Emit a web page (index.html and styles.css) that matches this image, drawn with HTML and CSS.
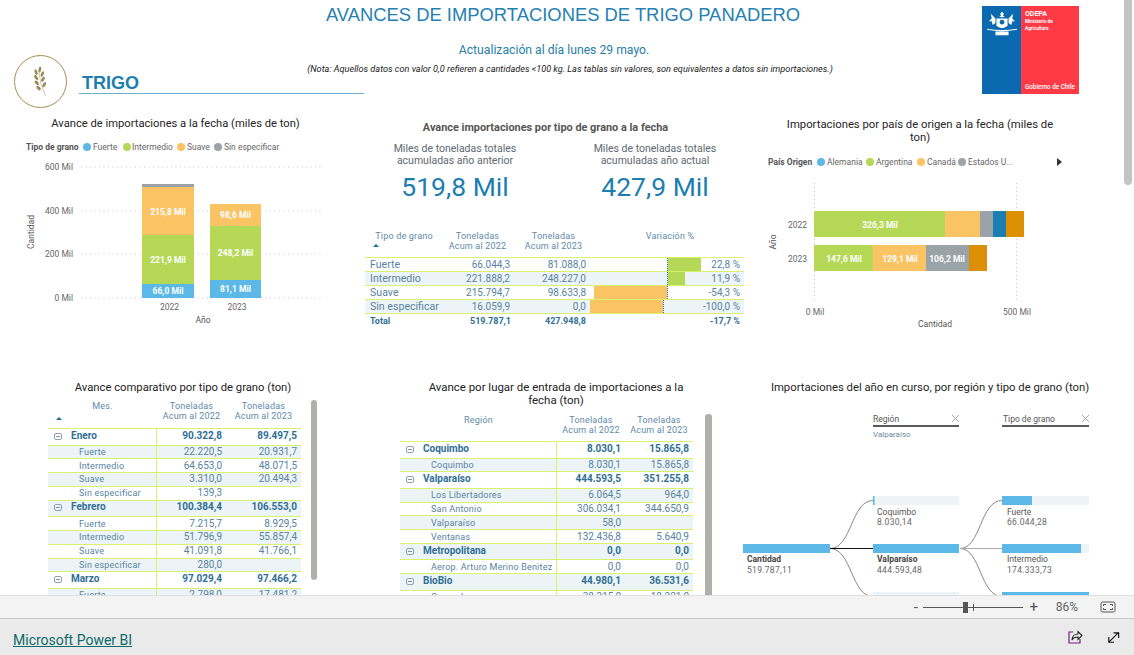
FILE: index.html
```html
<!DOCTYPE html>
<html lang="es">
<head>
<meta charset="utf-8">
<title>Avances de importaciones de trigo panadero</title>
<link rel="stylesheet" href="styles.css">
</head>
<body>
<div class="app">
  <main class="viewport">
    <div class="canvas">
      <header class="head">
        <div class="titles">
          <h1 class="main-title">AVANCES DE IMPORTACIONES DE TRIGO PANADERO</h1>
          <p class="update">Actualización al día lunes 29 mayo.</p>
          <p class="note">(Nota: Aquellos datos con valor 0,0 refieren a cantidades &lt;100 kg. Las tablas sin valores, son equivalentes a datos sin importaciones.)</p>
        </div>
        <div class="brand">
          <div class="badge">
            <svg viewBox="0 -1 24 35" width="15" height="31" preserveAspectRatio="none">
              <path class="stem" d="M9 3 Q10 18 20 33"/>
              <g class="grain">
                <ellipse cx="11" cy="3" rx="2" ry="3.400" transform="rotate(20 11 3)"/>
                <ellipse cx="5" cy="6" rx="2" ry="3.600" transform="rotate(-35 5 6)"/>
                <ellipse cx="15" cy="8" rx="2" ry="3.600" transform="rotate(40 15 8)"/>
                <ellipse cx="5" cy="12" rx="2" ry="3.800" transform="rotate(-50 5 12)"/>
                <ellipse cx="16" cy="14" rx="2" ry="3.600" transform="rotate(45 16 14)"/>
                <ellipse cx="6" cy="18" rx="2" ry="3.800" transform="rotate(-60 6 18)"/>
                <ellipse cx="18" cy="20" rx="2" ry="3.600" transform="rotate(50 18 20)"/>
                <ellipse cx="9" cy="24" rx="2" ry="3.800" transform="rotate(-65 9 24)"/>
              </g>
            </svg>
          </div>
          <div class="brand-name"><span>TRIGO</span></div>
        </div>
        <div class="logo">
          <div class="logo-blue">
            <svg viewBox="0 0 34 30" width="32" height="28">
              <path d="M17 2 l2 2 -1 2 2 1 -3 1 -3-1 2-1 -1-2z M11 9 h12 v8 q-6 5 -12 0z M10 9 L5 4 l1 5 -3 3 3 0 1 4 3-2z M24 9 l5-5 -1 5 3 3 -3 0 -1 4 -3-2z M1 20 q16 3 32 0 v1.200 q-16 3 -32 0z M10 23 h14 v4 H10z" fill="#fff"/>
              <circle cx="17" cy="13" r="2.500" fill="#0b69b0"/>
            </svg>
          </div>
          <div class="logo-red">
            <div class="logo-top">
              <strong>ODEPA</strong>
              <span>Ministerio de<br>Agricultura</span>
            </div>
            <b>Gobierno de Chile</b>
          </div>
        </div>
      </header>

      <section class="cell">
        <svg class="chart" viewBox="0 110 350 265" width="350" height="265">
          <text class="vis-title narrow" x="175.500" y="127" text-anchor="middle">Avance de importaciones a la fecha (miles de ton)</text>
          <text class="leg-title" x="26" y="150">Tipo de grano</text>
          <circle cx="87" cy="147" r="4" fill="#5cb8e6"/><text class="leg" x="93" y="150">Fuerte</text>
          <circle cx="127" cy="147" r="4" fill="#b5d957"/><text class="leg" x="132" y="150">Intermedio</text>
          <circle cx="181" cy="147" r="4" fill="#fac364"/><text class="leg" x="187" y="150">Suave</text>
          <circle cx="218" cy="147" r="4" fill="#9aa3a8"/><text class="leg" x="224" y="150">Sin especificar</text>
          <g class="grid">
            <path d="M81 167H322M81 211H322M81 254H322M81 298H322"/>
          </g>
          <text class="axis" x="73" y="170" text-anchor="end">600 Mil</text>
          <text class="axis" x="73" y="214" text-anchor="end">400 Mil</text>
          <text class="axis" x="73" y="257" text-anchor="end">200 Mil</text>
          <text class="axis" x="73" y="301" text-anchor="end">0 Mil</text>
          <rect x="142" y="184" width="52" height="3" fill="#9aa3a8"/>
          <rect x="142" y="187" width="52" height="48" fill="#fac364"/>
          <rect x="142" y="235" width="52" height="49" fill="#b5d957"/>
          <rect x="142" y="284" width="52" height="14" fill="#5cb8e6"/>
          <rect x="210" y="204" width="51" height="22" fill="#fac364"/>
          <rect x="210" y="226" width="51" height="54" fill="#b5d957"/>
          <rect x="210" y="280" width="51" height="18" fill="#5cb8e6"/>
          <text class="bar-label" x="168" y="215" text-anchor="middle">215,8 Mil</text>
          <text class="bar-label" x="168" y="263" text-anchor="middle">221,9 Mil</text>
          <text class="bar-label" x="168" y="294" text-anchor="middle">66,0 Mil</text>
          <text class="bar-label" x="235.500" y="218" text-anchor="middle">98,6 Mil</text>
          <text class="bar-label" x="235.500" y="256" text-anchor="middle">248,2 Mil</text>
          <text class="bar-label" x="235.500" y="292" text-anchor="middle">81,1 Mil</text>
          <text class="axis" x="169.500" y="310" text-anchor="middle">2022</text>
          <text class="axis" x="237" y="310" text-anchor="middle">2023</text>
          <text class="axis-name" x="203" y="323" text-anchor="middle">Año</text>
          <text class="axis-name" transform="translate(34 232) rotate(-90)" text-anchor="middle">Cantidad</text>
        </svg>
      </section>

      <section class="cell middle">
        <h2 class="mid-title">Avance importaciones por tipo de grano a la fecha</h2>
        <div class="kpis">
          <div class="kpi">
            <p class="kpi-label">Miles de toneladas totales<br>acumuladas año anterior</p>
            <p class="kpi-value">519,8 Mil</p>
          </div>
          <div class="kpi">
            <p class="kpi-label">Miles de toneladas totales<br>acumuladas año actual</p>
            <p class="kpi-value">427,9 Mil</p>
          </div>
        </div>
        <table class="grain-table">
          <colgroup><col class="g1"><col class="g2"><col class="g3"><col class="g4"></colgroup>
          <thead>
            <tr>
              <th class="th-grain">Tipo de grano<i class="sort"></i></th>
              <th>Toneladas<br>Acum al 2022</th>
              <th>Toneladas<br>Acum al 2023</th>
              <th>Variación %</th>
            </tr>
          </thead>
          <tbody>
            <tr>
              <td class="name">Fuerte</td><td>66.044,3</td><td>81.088,0</td>
              <td class="var"><div class="var-wrap"><div class="neg-side"></div><div class="pos-side"><div class="pos-bar w-fuerte"></div></div><span class="pct">22,8 %</span></div></td>
            </tr>
            <tr class="alt">
              <td class="name">Intermedio</td><td>221.888,2</td><td>248.227,0</td>
              <td class="var"><div class="var-wrap"><div class="neg-side"></div><div class="pos-side"><div class="pos-bar w-inter"></div></div><span class="pct">11,9 %</span></div></td>
            </tr>
            <tr>
              <td class="name">Suave</td><td>215.794,7</td><td>98.633,8</td>
              <td class="var"><div class="var-wrap"><div class="neg-side"><div class="neg-bar"></div></div><div class="pos-side"></div><span class="pct">-54,3 %</span></div></td>
            </tr>
            <tr class="alt">
              <td class="name">Sin especificar</td><td>16.059,9</td><td>0,0</td>
              <td class="var"><div class="var-wrap"><div class="neg-side"><div class="neg-bar"></div></div><div class="pos-side"></div><span class="pct">-100,0 %</span></div></td>
            </tr>
            <tr class="total">
              <td class="name">Total</td><td>519.787,1</td><td>427.948,8</td><td>-17,7 %</td>
            </tr>
          </tbody>
        </table>
      </section>

      <section class="cell">
        <svg class="chart" viewBox="750 110 384 265" width="384" height="265">
          <text class="vis-title" x="920" y="128" text-anchor="middle">Importaciones por país de origen a la fecha (miles de</text>
          <text class="vis-title" x="920" y="141" text-anchor="middle">ton)</text>
          <text class="leg-title" x="768" y="165">País Origen</text>
          <circle cx="821" cy="162" r="4" fill="#5cb8e6"/><text class="leg" x="827" y="165">Alemania</text>
          <circle cx="870" cy="162" r="4" fill="#b5d957"/><text class="leg" x="876" y="165">Argentina</text>
          <circle cx="921" cy="162" r="4" fill="#fac364"/><text class="leg" x="927" y="165">Canadá</text>
          <circle cx="962" cy="162" r="4" fill="#9aa3a8"/><text class="leg" x="968" y="165">Estados U...</text>
          <path d="M1057 158l5 4-5 4z" fill="#333"/>
          <path class="vgrid" d="M814.500 183V303M1016.500 183V303"/>
          <rect x="814" y="211" width="131" height="26" fill="#b5d957"/>
          <rect x="945" y="211" width="35" height="26" fill="#fac364"/>
          <rect x="980" y="211" width="13" height="26" fill="#9aa3a8"/>
          <rect x="993" y="211" width="13" height="26" fill="#1a7fb0"/>
          <rect x="1006" y="211" width="18" height="26" fill="#dd8f06"/>
          <rect x="814" y="245" width="59" height="26" fill="#b5d957"/>
          <rect x="873" y="245" width="53" height="26" fill="#fac364"/>
          <rect x="926" y="245" width="43" height="26" fill="#9aa3a8"/>
          <rect x="969" y="245" width="18" height="26" fill="#dd8f06"/>
          <text class="bar-label" x="880" y="228" text-anchor="middle">326,3 Mil</text>
          <text class="bar-label" x="844" y="262" text-anchor="middle">147,6 Mil</text>
          <text class="bar-label" x="900" y="262" text-anchor="middle">129,1 Mil</text>
          <text class="bar-label" x="947" y="262" text-anchor="middle">106,2 Mil</text>
          <text class="axis" x="807" y="228" text-anchor="end">2022</text>
          <text class="axis" x="807" y="262" text-anchor="end">2023</text>
          <text class="axis" x="815" y="315" text-anchor="middle">0 Mil</text>
          <text class="axis" x="1017" y="315" text-anchor="middle">500 Mil</text>
          <text class="axis-name" x="935" y="327" text-anchor="middle">Cantidad</text>
          <text class="axis-name" transform="translate(776 242) rotate(-90)" text-anchor="middle">Año</text>
        </svg>
      </section>

      <section class="cell table-cell left-table">
        <h2 class="tbl-title">Avance comparativo por tipo de grano (ton)</h2>
        <div class="tbl-row">
          <table class="matrix m-month">
            <colgroup><col class="m1"><col class="m2"><col class="m3"></colgroup>
            <thead>
              <tr><th>Mes.<i class="sort"></i></th><th>Toneladas<br>Acum al 2022</th><th>Toneladas<br>Acum al 2023</th></tr>
            </thead>
            <tbody>
              <tr class="group"><td><i class="exp"></i>Enero</td><td>90.322,8</td><td>89.497,5</td></tr>
              <tr class="child alt"><td>Fuerte</td><td>22.220,5</td><td>20.931,7</td></tr>
              <tr class="child"><td>Intermedio</td><td>64.653,0</td><td>48.071,5</td></tr>
              <tr class="child alt"><td>Suave</td><td>3.310,0</td><td>20.494,3</td></tr>
              <tr class="child"><td>Sin especificar</td><td>139,3</td><td></td></tr>
              <tr class="group alt"><td><i class="exp"></i>Febrero</td><td>100.384,4</td><td>106.553,0</td></tr>
              <tr class="child"><td>Fuerte</td><td>7.215,7</td><td>8.929,5</td></tr>
              <tr class="child alt"><td>Intermedio</td><td>51.796,9</td><td>55.857,4</td></tr>
              <tr class="child"><td>Suave</td><td>41.091,8</td><td>41.766,1</td></tr>
              <tr class="child alt"><td>Sin especificar</td><td>280,0</td><td></td></tr>
              <tr class="group"><td><i class="exp"></i>Marzo</td><td>97.029,4</td><td>97.466,2</td></tr>
              <tr class="child alt"><td>Fuerte</td><td>2.798,0</td><td>17.481,2</td></tr>
            </tbody>
          </table>
          <div class="inner-scroll s-left"></div>
        </div>
      </section>

      <section class="cell table-cell mid-table">
        <h2 class="tbl-title">Avance por lugar de entrada de importaciones a la<br>fecha (ton)</h2>
        <div class="tbl-row">
          <table class="matrix m-region">
            <colgroup><col class="r1"><col class="r2"><col class="r3"></colgroup>
            <thead>
              <tr><th>Región</th><th>Toneladas<br>Acum al 2022</th><th>Toneladas<br>Acum al 2023</th></tr>
            </thead>
            <tbody>
              <tr class="group"><td><i class="exp"></i>Coquimbo</td><td>8.030,1</td><td>15.865,8</td></tr>
              <tr class="child alt"><td>Coquimbo</td><td>8.030,1</td><td>15.865,8</td></tr>
              <tr class="group"><td><i class="exp"></i>Valparaíso</td><td>444.593,5</td><td>351.255,8</td></tr>
              <tr class="child alt"><td>Los Libertadores</td><td>6.064,5</td><td>964,0</td></tr>
              <tr class="child"><td>San Antonio</td><td>306.034,1</td><td>344.650,9</td></tr>
              <tr class="child alt"><td>Valparaíso</td><td>58,0</td><td></td></tr>
              <tr class="child"><td>Ventanas</td><td>132.436,8</td><td>5.640,9</td></tr>
              <tr class="group alt"><td><i class="exp"></i>Metropolitana</td><td>0,0</td><td>0,0</td></tr>
              <tr class="child"><td>Aerop. Arturo Merino Benitez</td><td>0,0</td><td>0,0</td></tr>
              <tr class="group alt"><td><i class="exp"></i>BioBio</td><td>44.980,1</td><td>36.531,6</td></tr>
              <tr class="child"><td>Coronel</td><td>38.315,0</td><td>18.221,0</td></tr>
            </tbody>
          </table>
          <div class="inner-scroll s-mid"></div>
        </div>
      </section>

      <section class="cell tree-cell">
        <svg class="chart" viewBox="730 375 404 220" width="404" height="220">
          <text class="vis-title" x="930" y="391" text-anchor="middle">Importaciones del año en curso, por región y tipo de grano (ton)</text>
          <text class="tree-head" x="873" y="422">Región</text>
          <path class="tree-x" d="M952 415l7 7M959 415l-7 7"/>
          <path class="tree-rule" d="M873 426H959"/>
          <text class="tree-sub" x="873" y="437">Valparaíso</text>
          <text class="tree-head" x="1003" y="422">Tipo de grano</text>
          <path class="tree-x" d="M1082 415l7 7M1089 415l-7 7"/>
          <path class="tree-rule" d="M1002 426H1089"/>

          <path class="tree-link" d="M830 548.500C852 548.500 851 500.500 873 500.500"/>
          <path class="tree-link" d="M830 548.500C852 548.500 851 596.500 873 596.500"/>
          <path class="tree-link main" d="M830 548.500H873"/>
          <path class="tree-link" d="M960 548.500C981 548.500 980 500.500 1002 500.500"/>
          <path class="tree-link" d="M960 548.500C981 548.500 980 596.500 1002 596.500"/>
          <path class="tree-link soft" d="M960 548.500H1002"/>

          <rect x="743" y="544" width="87" height="9" fill="#5cb8e6"/>
          <text class="tree-name strong" x="747" y="562">Cantidad</text>
          <text class="tree-val" x="747" y="573">519.787,11</text>

          <rect x="873" y="496" width="86" height="9" fill="#edf4f8"/>
          <rect x="873" y="496" width="1.500" height="9" fill="#5cb8e6"/>
          <text class="tree-name" x="877" y="515">Coquimbo</text>
          <text class="tree-val" x="877" y="525">8.030,14</text>

          <rect x="873" y="544" width="86" height="9" fill="#5cb8e6"/>
          <text class="tree-name strong" x="877" y="562">Valparaíso</text>
          <text class="tree-val" x="877" y="573">444.593,48</text>

          <rect x="873" y="592" width="86" height="9" fill="#edf4f8"/>

          <rect x="1002" y="496" width="87" height="9" fill="#edf4f8"/>
          <rect x="1002" y="496" width="30" height="9" fill="#5cb8e6"/>
          <text class="tree-name" x="1007" y="515">Fuerte</text>
          <text class="tree-val" x="1007" y="525">66.044,28</text>

          <rect x="1002" y="544" width="87" height="9" fill="#edf4f8"/>
          <rect x="1002" y="544" width="79" height="9" fill="#5cb8e6"/>
          <text class="tree-name" x="1007" y="562">Intermedio</text>
          <text class="tree-val" x="1007" y="573">174.333,73</text>

          <rect x="1002" y="592" width="87" height="9" fill="#5cb8e6"/>
        </svg>
      </section>
    </div>
    <div class="page-scroll"></div>
  </main>

  <div class="zoombar">
    <span class="zoom-sign minus">-</span>
    <div class="zoom-track"><i class="zoom-tick"></i><i class="zoom-thumb"></i></div>
    <span class="zoom-sign plus">+</span>
    <span class="zoom-pct">86%</span>
    <svg class="fit" viewBox="0 0 16 12" width="16" height="12">
      <rect x="1" y="1" width="14" height="10" rx="1.500"/>
      <path d="M3.500 5V3.500H6M10 3.500h2.500V5M12.500 7v1.500H10M6 8.500H3.500V7"/>
    </svg>
  </div>

  <footer class="footer">
    <a class="pbi-link" href="#">Microsoft Power BI</a>
    <div class="footer-icons">
      <svg viewBox="0 0 16 16" width="16" height="16">
        <path class="share-box" d="M6 3H2v11h11v-4"/>
        <path class="share-arrow" d="M5 11c0-4 3-6 6-6V2.500l4 4-4 4V8c-3 0-5 1-6 3z"/>
      </svg>
      <svg viewBox="0 0 16 16" width="15" height="15">
        <path class="expand" d="M3 13L13 3M8 3h5.500v5.500M3 7.500V13h5.500"/>
      </svg>
    </div>
  </footer>
</div>
</body>
</html>
```
FILE: styles.css
```css
* { box-sizing: border-box; }
html, body { margin: 0; height: 100%; }
body { font-family: Roboto, "Liberation Sans", sans-serif; background: #fff; color: #333; overflow: hidden; }
h1, h2, p { margin: 0; font-weight: normal; }

.app { display: flex; flex-direction: column; height: 100vh; }
.viewport { flex: 1; min-height: 0; position: relative; overflow: hidden; }
.canvas { display: grid; grid-template-columns: 350px 400px 384px; grid-template-rows: 110px 265px 221px; }

/* header */
.head { grid-column: 1 / -1; display: grid; }
.head > * { grid-area: 1 / 1; }
.titles { padding-top: 4px; }
.main-title { font-family: "Liberation Sans", sans-serif; font-size: 18.400px; line-height: 22px; color: #2580b3; text-align: center; padding-right: 8px; }
.update { font-size: 12.200px; line-height: 16px; color: #2a7ea8; text-align: center; margin-top: 16px; padding-right: 26px; }
.note { font-size: 9.150px; line-height: 12px; font-style: italic; color: #222; text-align: center; margin-top: 5px; padding-left: 6px; }
.brand { display: flex; align-self: start; justify-self: start; margin: 55px 0 0 14px; }
.badge { width: 53px; height: 53px; border: 1.200px solid #a88c4f; border-radius: 50%; display: flex; align-items: center; justify-content: center; }
.stem { fill: none; stroke: #b5a47a; stroke-width: .8; }
.grain { fill: #9b8a55; }
.brand-name { width: 285px; height: 39px; margin-left: 12px; border-bottom: 1.500px solid #6fb0cc; display: flex; align-items: flex-end; padding-left: 3px; }
.brand-name span { font-family: "Liberation Sans", sans-serif; font-weight: bold; font-size: 18px; line-height: 20px; color: #1c7eb0; }
.logo { justify-self: end; align-self: start; display: flex; width: 97px; height: 88px; margin: 6px 55px 0 0; }
.logo-blue { width: 39px; background: #0b69b0; display: flex; justify-content: center; align-items: flex-start; padding-top: 4px; }
.logo-red { flex: 1; background: #ff3a47; color: #fff; padding: 4px 4px 3px; display: flex; flex-direction: column; justify-content: space-between; }
.logo-top { display: flex; flex-direction: column; }
.logo-top strong { font-size: 7px; line-height: 9px; }
.logo-top span { font-size: 4.700px; line-height: 6.500px; font-weight: bold; }
.logo-red b { font-size: 6.300px; font-weight: 500; line-height: 8px; white-space: nowrap; }

/* svg charts */
.chart { display: block; }
.vis-title { font-size: 11.300px; fill: #252525; }
.vis-title.narrow { font-size: 11.200px; }
.leg-title { font-size: 8.500px; font-weight: bold; fill: #555; }
.leg { font-size: 8.500px; fill: #666; }
.axis { font-size: 8.500px; fill: #666; }
.axis-name { font-size: 8.500px; fill: #555; }
.bar-label { font-size: 8.500px; font-weight: bold; fill: #fff; }
.grid path { fill: none; stroke: #c4c8cc; stroke-width: 1; stroke-dasharray: 1 3.500; }
.vgrid { fill: none; stroke: #c4c8cc; stroke-dasharray: 1 3; }
.tree-cell { margin-left: -20px; }

/* middle */
.middle { padding-left: 5px; }
.mid-title { font-size: 10.900px; line-height: 12px; font-weight: bold; color: #555; text-align: center; margin-top: 12px; padding-right: 14px; white-space: nowrap; }
.kpis { display: flex; margin-top: 9px; }
.kpi { flex: none; width: 200px; text-align: center; }
.kpi-label { font-size: 10.500px; line-height: 11.500px; color: #5d6870; }
.kpi-value { font-size: 26.500px; line-height: 30px; color: #1c7eb0; margin-top: 6px; }

.grain-table { border-collapse: separate; border-spacing: 0; table-layout: fixed; width: 379px; margin: 29px 0 0 10px; color: #58829f; font-size: 10px; }
.g1 { width: 69px; } .g2 { width: 77px; } .g3 { width: 75px; } .g4 { width: 158px; }
.grain-table th { font-weight: normal; font-size: 9px; letter-spacing: .2px; line-height: 10px; vertical-align: top; height: 26px; color: #5d8aa8; padding: 0 0 0 10px; white-space: nowrap; }
.th-grain { text-align: center; }
.grain-table .th-grain { padding-left: 9px; }
.grain-table .sort { margin-left: -1px; }
.sort { display: block; width: 0; height: 0; margin: 3px 0 0 4px; border: 3px solid transparent; border-top: 0; border-bottom: 3px solid #1c6e9c; }
.grain-table td { height: 14px; padding: 0; border-top: 1px solid #d9f26b; text-align: right; line-height: 13px; white-space: nowrap; }
.grain-table td:nth-child(2) { padding-right: 1px; }
.grain-table td.name { text-align: left; padding-left: 5px; font-size: 10.600px; }
.alt td { background: #edf4f8; }
.var-wrap { display: flex; align-items: stretch; height: 13px; }
.neg-side { width: 81px; display: flex; justify-content: flex-end; }
.neg-bar { width: 73px; background: #fac364; }
.pos-side { width: 42px; border-left: 1px dotted #1c6e9c; }
.pos-bar { height: 100%; background: #b5d957; }
.w-fuerte { width: 33px; } .w-inter { width: 17px; }
.pct { flex: 1; padding-right: 4px; text-align: right; }
.grain-table .total td { border-top: 1px solid #d9f26b; font-weight: bold; color: #2f6f95; font-size: 9px; line-height: 14px; height: 15px; padding-right: 0; }
.grain-table .total td:last-child { padding-right: 4px; }
.grain-table .total td.name { font-size: 9px; }

/* matrices */
.tbl-title { font-size: 11.250px; line-height: 13px; color: #222; text-align: center; margin-top: 6px; }
.left-table .tbl-title { padding-left: 16px; }
.mid-table .tbl-title { padding-left: 12px; font-size: 11.450px; }
.tbl-row { display: flex; align-items: flex-start; margin-top: 6px; }
.left-table .tbl-row { padding-left: 48px; }
.mid-table .tbl-row { padding-left: 50px; margin-top: 7px; }
.matrix { border-collapse: separate; border-spacing: 0; table-layout: fixed; font-size: 9.500px; color: #58829f; }
.m-month { width: 253px; }
.m-region { width: 293px; }
.m1 { width: 109px; } .m2 { width: 69px; } .m3 { width: 75px; }
.r1 { width: 157px; } .r2 { width: 68px; } .r3 { width: 68px; }
.matrix th { font-weight: normal; font-size: 9px; letter-spacing: .2px; line-height: 10px; color: #5d8aa8; vertical-align: top; padding: 1px 0 0; height: 28px; white-space: nowrap; }
.m-region th { height: 27px; }
.matrix .sort { margin: 6px 0 0 8px; }
.matrix td { padding: 0 4px 0 0; border-top: 1px solid #d9f26b; text-align: right; line-height: 12px; white-space: nowrap; overflow: hidden; }
.matrix td:first-child { text-align: left; border-right: 1px solid #d9f26b; }
.group td { height: 16.500px; font-weight: bold; color: #2f6f95; font-size: 10px; padding-bottom: 2px; }
.child td { height: 13.800px; font-size: 10px; }
.group td:first-child { padding-left: 6px; }
.child td:first-child { padding-left: 31px; font-size: 9px; letter-spacing: .2px; }
.exp { display: inline-block; position: relative; width: 8px; height: 7px; border: 1px solid #8da2b0; border-radius: 2px; margin-right: 9px; vertical-align: -1px; }
.exp::after { content: ""; position: absolute; left: 1px; right: 1px; top: 2px; height: 1px; background: #7d93a2; }
.inner-scroll { width: 6px; border-radius: 3px; background: #b0afad; flex: none; }
.s-left { height: 180px; margin-left: 10px; }
.s-mid { width: 7px; height: 190px; margin-left: 12px; border-radius: 3px 3px 0 0; }

/* tree */
.tree-head { font-size: 8.500px; fill: #555; }
.tree-sub { font-size: 8px; fill: #6f8a9c; }
.tree-x { fill: none; stroke: #aaa; stroke-width: 1; }
.tree-rule { fill: none; stroke: #222; stroke-width: 1.500; }
.tree-link { fill: none; stroke: #888; stroke-width: 1; }
.tree-link.main { stroke: #111; }
.tree-link.soft { stroke: #aaa; }
.tree-name { font-size: 8.500px; fill: #555; }
.tree-name.strong { font-weight: bold; fill: #444; }
.tree-val { font-size: 8.500px; fill: #666; letter-spacing: .3px; }

.page-scroll { position: absolute; top: 0; left: 1124px; width: 8px; height: 185px; background: #c4c4c4; border-radius: 0 0 4px 4px; }

/* zoom bar */
.zoombar { height: 24px; flex: none; background: #f3f3f3; border-top: 1px solid #e0e0e0; border-bottom: 1px solid #c8c8c8; display: flex; align-items: center; justify-content: flex-end; padding-right: 18px; color: #555; }
.zoom-sign { font-size: 15px; line-height: 16px; width: 12px; text-align: center; }
.zoom-track { position: relative; width: 100px; height: 1px; background: #555; margin: 0 5px 0 1px; }
.zoom-tick { position: absolute; left: 50px; top: -3px; width: 1px; height: 7px; background: #555; }
.zoom-thumb { position: absolute; left: 40px; top: -5px; width: 5px; height: 11px; background: #555; }
.plus { margin-right: 16px; }
.zoom-pct { font-size: 12px; margin-right: 22px; color: #666; }
.fit { display: block; }
.fit rect, .fit path { fill: none; stroke: #555; stroke-width: 1; }

/* footer */
.footer { flex: 1 0 36px; max-height: 36px; background: #eaeaea; display: flex; align-items: center; justify-content: space-between; padding: 0 13px; }
.pbi-link { font-size: 14px; color: #0b6a6a; margin-top: 5px; }
.footer-icons { display: flex; gap: 23px; align-items: center; }
.share-box { fill: none; stroke: #7a1f8a; stroke-width: 1.200; }
.share-arrow { fill: #eaeaea; stroke: #222; stroke-width: 1.100; }
.expand { fill: none; stroke: #111; stroke-width: 1.200; }
```
